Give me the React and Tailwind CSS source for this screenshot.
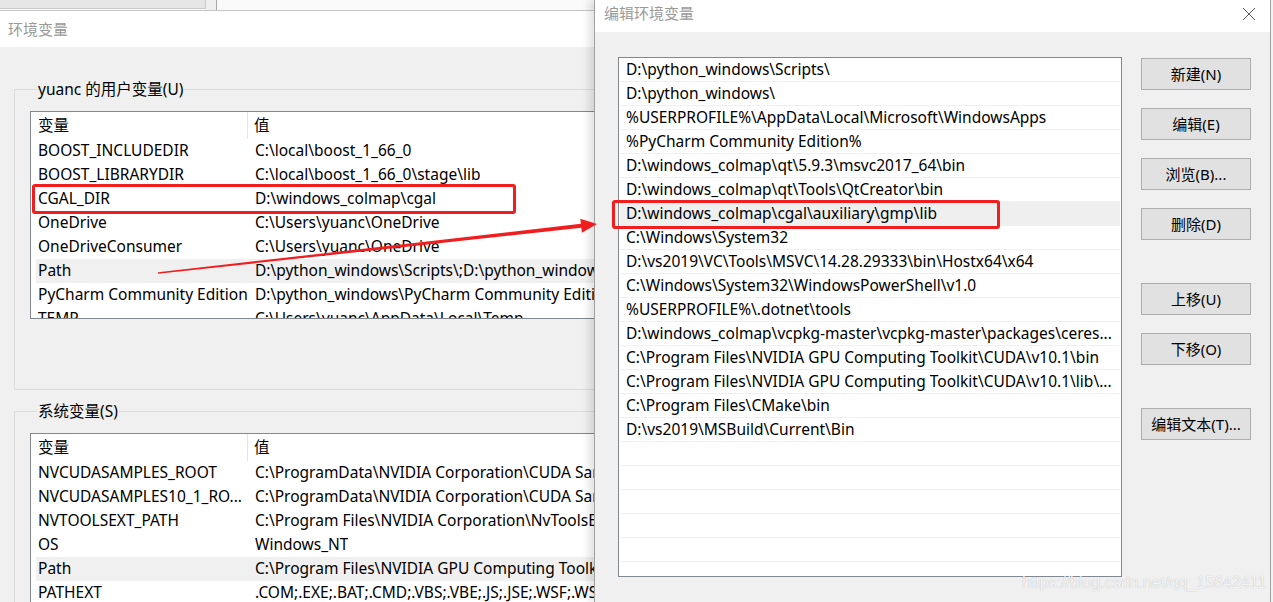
import React from "react";

const font = "font-['Noto_Sans','Noto_Sans_CJK_SC',sans-serif]";

const userVars = [
  ["BOOST_INCLUDEDIR", "C:\\local\\boost_1_66_0"],
  ["BOOST_LIBRARYDIR", "C:\\local\\boost_1_66_0\\stage\\lib"],
  ["CGAL_DIR", "D:\\windows_colmap\\cgal"],
  ["OneDrive", "C:\\Users\\yuanc\\OneDrive"],
  ["OneDriveConsumer", "C:\\Users\\yuanc\\OneDrive"],
  ["Path", "D:\\python_windows\\Scripts\\;D:\\python_windows\\;%USERPROFILE%\\AppData", true],
  ["PyCharm Community Edition", "D:\\python_windows\\PyCharm Community Edition 2020.2\\bin;"],
  ["TEMP", "C:\\Users\\yuanc\\AppData\\Local\\Temp"],
];

const sysVars = [
  ["NVCUDASAMPLES_ROOT", "C:\\ProgramData\\NVIDIA Corporation\\CUDA Samples\\v10.1"],
  ["NVCUDASAMPLES10_1_RO...", "C:\\ProgramData\\NVIDIA Corporation\\CUDA Samples\\v10.1"],
  ["NVTOOLSEXT_PATH", "C:\\Program Files\\NVIDIA Corporation\\NvToolsExt\\"],
  ["OS", "Windows_NT"],
  ["Path", "C:\\Program Files\\NVIDIA GPU Computing Toolkit\\CUDA\\v10.1\\bin;", true],
  ["PATHEXT", ".COM;.EXE;.BAT;.CMD;.VBS;.VBE;.JS;.JSE;.WSF;.WSH;.MSC"],
];

const pathItems = [
  "D:\\python_windows\\Scripts\\",
  "D:\\python_windows\\",
  "%USERPROFILE%\\AppData\\Local\\Microsoft\\WindowsApps",
  "%PyCharm Community Edition%",
  "D:\\windows_colmap\\qt\\5.9.3\\msvc2017_64\\bin",
  "D:\\windows_colmap\\qt\\Tools\\QtCreator\\bin",
  "D:\\windows_colmap\\cgal\\auxiliary\\gmp\\lib",
  "C:\\Windows\\System32",
  "D:\\vs2019\\VC\\Tools\\MSVC\\14.28.29333\\bin\\Hostx64\\x64",
  "C:\\Windows\\System32\\WindowsPowerShell\\v1.0",
  "%USERPROFILE%\\.dotnet\\tools",
  "D:\\windows_colmap\\vcpkg-master\\vcpkg-master\\packages\\ceres...",
  "C:\\Program Files\\NVIDIA GPU Computing Toolkit\\CUDA\\v10.1\\bin",
  "C:\\Program Files\\NVIDIA GPU Computing Toolkit\\CUDA\\v10.1\\lib\\...",
  "C:\\Program Files\\CMake\\bin",
  "D:\\vs2019\\MSBuild\\Current\\Bin",
  "",
  "",
  "",
  "",
  "",
  "",
];

function VarList({ rows, height }) {
  return (
    <div className={`border border-[#828790] bg-white overflow-hidden ${height}`}>
      <div className="flex h-[27px] items-center pl-[5px]">
        <div className="w-[212px] h-full flex items-center pl-[2px] border-r border-[#e5e5e5]">变量</div>
        <div className="pl-[6px]">值</div>
      </div>
      <div className="pl-[5px]">
        {rows.map(([name, value, selected]) => (
          <div key={name} className={`flex h-[24px] items-center whitespace-nowrap ${selected ? "bg-[#f0f0f0]" : ""}`}>
            <div className="w-[219px] shrink-0 pl-[2px] overflow-hidden">{name}</div>
            <div className="overflow-hidden">{value}</div>
          </div>
        ))}
      </div>
    </div>
  );
}

function GroupBox({ label, children, height }) {
  return (
    <fieldset className={`shrink-0 border border-[#dcdcdc] pl-[15px] pr-0 ${height}`}>
      <legend className="ml-[7px] px-[1px] leading-[20px]">{label}</legend>
      <div className="mt-[12px]">{children}</div>
    </fieldset>
  );
}

function WinButton({ children, className = "" }) {
  return (
    <div className={`w-[110px] h-[32px] shrink-0 border border-[#adadad] bg-[#e1e1e1] flex items-center justify-center ${className}`}>
      {children}
    </div>
  );
}

export default function App() {
  return (
    <div className={`relative w-[1273px] h-[602px] overflow-hidden bg-[#f4f4f4] text-[15.5px] text-black ${font}`}>
      {/* window behind */}
      <div className="absolute left-0 top-0 w-[600px] h-[11px] bg-[#fafafa] flex">
        <div className="w-[206px] h-[9px] bg-[#e6e6e6] border-r border-b border-[#c9c9c9]" />
        <div className="w-[11px] h-full bg-[#efefef] border-r border-[#a8a8a8]" />
      </div>

      {/* 环境变量 dialog */}
      <div className="absolute left-0 top-[10px] w-[596px] h-[592px] overflow-hidden bg-[#f0f0f0] border-t border-[#c4c4c4]">
        <div className="w-[720px]">
          <div className="h-[36px] bg-white flex items-center pl-[8px] text-[15px] text-[#9a9a9a]">环境变量</div>
          <div className="pl-[14px] pt-[32px] flex flex-col">
            <GroupBox label="yuanc 的用户变量(U)" height="h-[311px]">
              <VarList rows={userVars} height="h-[208px]" />
            </GroupBox>
            <div className="mt-[11px]">
              <GroupBox label="系统变量(S)" height="h-[300px]">
                <VarList rows={sysVars} height="h-[200px]" />
              </GroupBox>
            </div>
          </div>
        </div>
      </div>

      {/* 编辑环境变量 dialog */}
      <div className="absolute left-[594px] top-0 w-[677px] h-[602px] bg-[#f0f0f0] border-x border-[#a0a0a0] shadow-[-5px_0_8px_rgba(0,0,0,0.12)] flex flex-col">
        <div className="h-[32px] shrink-0 bg-white flex items-start justify-between">
          <div className="pl-[9px] pt-[3px] leading-[20px] text-[15px] text-[#9a9a9a]">编辑环境变量</div>
          <svg className="mt-[7px] mr-[14px]" width="14" height="14" viewBox="0 0 14 14">
            <path d="M1 1 L13 13 M13 1 L1 13" stroke="#555" strokeWidth="1" fill="none" />
          </svg>
        </div>
        <div className="flex pt-[25px] pl-[23px]">
          <div className="w-[504px] h-[520px] shrink-0 border border-[#828790] bg-white overflow-hidden">
            {pathItems.map((p, i) => (
              <div
                key={i}
                className={`h-[24px] mx-[1px] pt-[1px] border-b border-[#f0f0f0] flex items-center pl-[6px] whitespace-nowrap overflow-hidden ${i === 6 ? "bg-[#efefef]" : ""}`}
              >
                {p}
              </div>
            ))}
          </div>
          <div className="ml-[19px] pt-[1px] flex flex-col text-[15px]">
            <WinButton>新建(N)</WinButton>
            <WinButton className="mt-[18px]">编辑(E)</WinButton>
            <WinButton className="mt-[18px]">浏览(B)...</WinButton>
            <WinButton className="mt-[18px]">删除(D)</WinButton>
            <WinButton className="mt-[43px]">上移(U)</WinButton>
            <WinButton className="mt-[18px]">下移(O)</WinButton>
            <WinButton className="mt-[43px]">编辑文本(T)...</WinButton>
          </div>
        </div>
      </div>

      {/* annotations */}
      <div className="absolute left-[32px] top-[184px] w-[484px] h-[30px] border-[3px] border-[#f01e1e] rounded-[3px]" />
      <div className="absolute left-[612px] top-[200px] w-[388px] h-[29px] border-[3px] border-[#f01e1e] rounded-[3px]" />
      <svg className="absolute left-0 top-0 pointer-events-none" width="1273" height="602">
        <polygon
          points="158.1,272.3 580.9,223.8 580.3,218.8 597,224 581.9,232.7 581.3,227.8 157.9,273.8"
          fill="#f01e1e"
        />
      </svg>

      <div className="absolute left-[1022px] top-[573px] leading-[20px] text-[16px] font-['Liberation_Sans',sans-serif] text-white/85 [text-shadow:0_0_1px_rgba(0,0,0,0.3)]">
        https://blog.csdn.net/qq_15642411
      </div>
    </div>
  );
}
